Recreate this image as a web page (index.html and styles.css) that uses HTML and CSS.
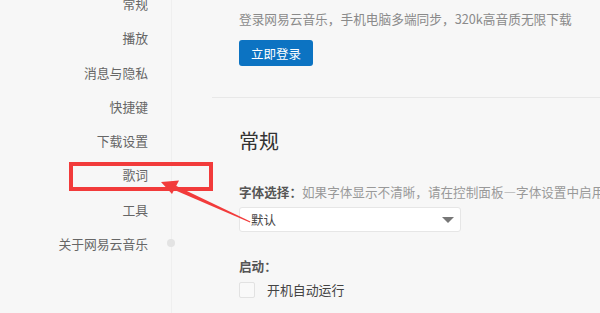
FILE: index.html
```html
<!DOCTYPE html>
<html lang="zh-CN">
<head>
<meta charset="utf-8">
<link rel="stylesheet" href="styles.css">
</head>
<body>
<div class="app">
  <aside class="sidebar">
    <ul class="nav">
      <li>常规</li>
      <li>播放</li>
      <li>消息与隐私</li>
      <li>快捷键</li>
      <li>下载设置</li>
      <li>歌词</li>
      <li>工具</li>
      <li>关于网易云音乐</li>
    </ul>
    <span class="dot"></span>
  </aside>
  <main class="main">
    <section class="login">
      <p class="login-tip">登录网易云音乐，手机电脑多端同步，320k高音质无限下载</p>
      <button class="btn">立即登录</button>
    </section>
    <section class="settings">
      <h2 class="title">常规</h2>
      <p class="label"><b>字体选择：</b><span class="desc">如果字体显示不清晰，请在控制面板—字体设置中启用系统ClearType设置</span></p>
      <div class="select"><span>默认</span><i class="caret"></i></div>
      <p class="label label-start"><b>启动：</b></p>
      <label class="check"><span class="box"></span><span>开机自动运行</span></label>
    </section>
  </main>
</div>
<div class="mark"></div>
<svg class="arrow" width="600" height="313" viewBox="0 0 600 313">
  <polygon points="161,182 179,180.5 172,194" fill="#f23b3b"/>
  <polygon points="172.8,184.2 171,188.6 250,222.6 250.4,221.6" fill="#f23b3b"/>
</svg>
</body>
</html>
```

FILE: styles.css
```css
* { box-sizing: border-box; }
html, body {
  margin: 0;
  padding: 0;
}
body {
  width: 600px;
  height: 313px;
  overflow: hidden;
  position: relative;
  background: #f7f7f7;
  font-family: "Noto Sans CJK SC", "Noto Sans", "Liberation Sans", sans-serif;
  color: #333;
}
.app {
  display: flex;
  height: 313px;
}
.sidebar {
  position: relative;
  width: 172px;
  flex: none;
  border-right: 1px solid #efefef;
}
.nav {
  list-style: none;
  margin: -13px 0 0;
  padding: 0 23px 0 0;
  text-align: right;
}
.nav li {
  height: 34.3px;
  line-height: 34.3px;
  font-size: 12.8px;
  color: #666;
}
.dot {
  position: absolute;
  left: 167px;
  top: 239px;
  width: 8px;
  height: 8px;
  border-radius: 50%;
  background: #e3e3e3;
}
.main {
  flex: 1;
  padding-left: 40px;
  min-width: 0;
}
.login {
  padding: 10px 0 31px 27px;
  border-bottom: 1px solid #e8e8e8;
}
.login-tip {
  margin: 0;
  font-size: 12.7px;
  line-height: 18px;
  color: #8a8a8a;
  white-space: nowrap;
}
.btn {
  display: block;
  margin-top: 12px;
  width: 74px;
  height: 26px;
  border: none;
  border-radius: 3px;
  background: #0c73c2;
  color: #fff;
  font-family: inherit;
  font-size: 12.5px;
  padding: 0;
}
.settings {
  padding: 29px 0 0 27px;
}
.title {
  margin: 0;
  font-size: 20px;
  line-height: 28px;
  font-weight: normal;
  color: #333;
}
.label {
  margin: 28px 0 0;
  font-size: 12.6px;
  line-height: 18px;
  white-space: nowrap;
}
.label b {
  color: #555;
  font-weight: bold;
}
.desc {
  color: #999;
}
.select {
  margin-top: 6px;
  width: 222px;
  height: 25px;
  background: #fff;
  border: 1px solid #e6e6e6;
  border-radius: 3px;
  display: flex;
  align-items: center;
  justify-content: space-between;
  padding: 0 6px 0 11px;
  font-size: 12.5px;
  color: #444;
}
.caret {
  width: 0;
  height: 0;
  border-left: 6px solid transparent;
  border-right: 6px solid transparent;
  border-top: 6px solid #777;
}
.label-start {
  margin-top: 25px;
}
.check {
  margin-top: 6px;
  display: flex;
  align-items: center;
  gap: 12px;
  font-size: 12.9px;
  line-height: 18px;
  color: #444;
}
.box {
  width: 16px;
  height: 16px;
  border: 1px solid #e2e2e2;
  border-radius: 2px;
  background: #f9f9f9;
}
.mark {
  position: absolute;
  left: 69px;
  top: 162px;
  width: 144px;
  height: 29px;
  border: 4.5px solid #f23b3b;
}
.arrow {
  position: absolute;
  left: 0;
  top: 0;
  pointer-events: none;
}
```
